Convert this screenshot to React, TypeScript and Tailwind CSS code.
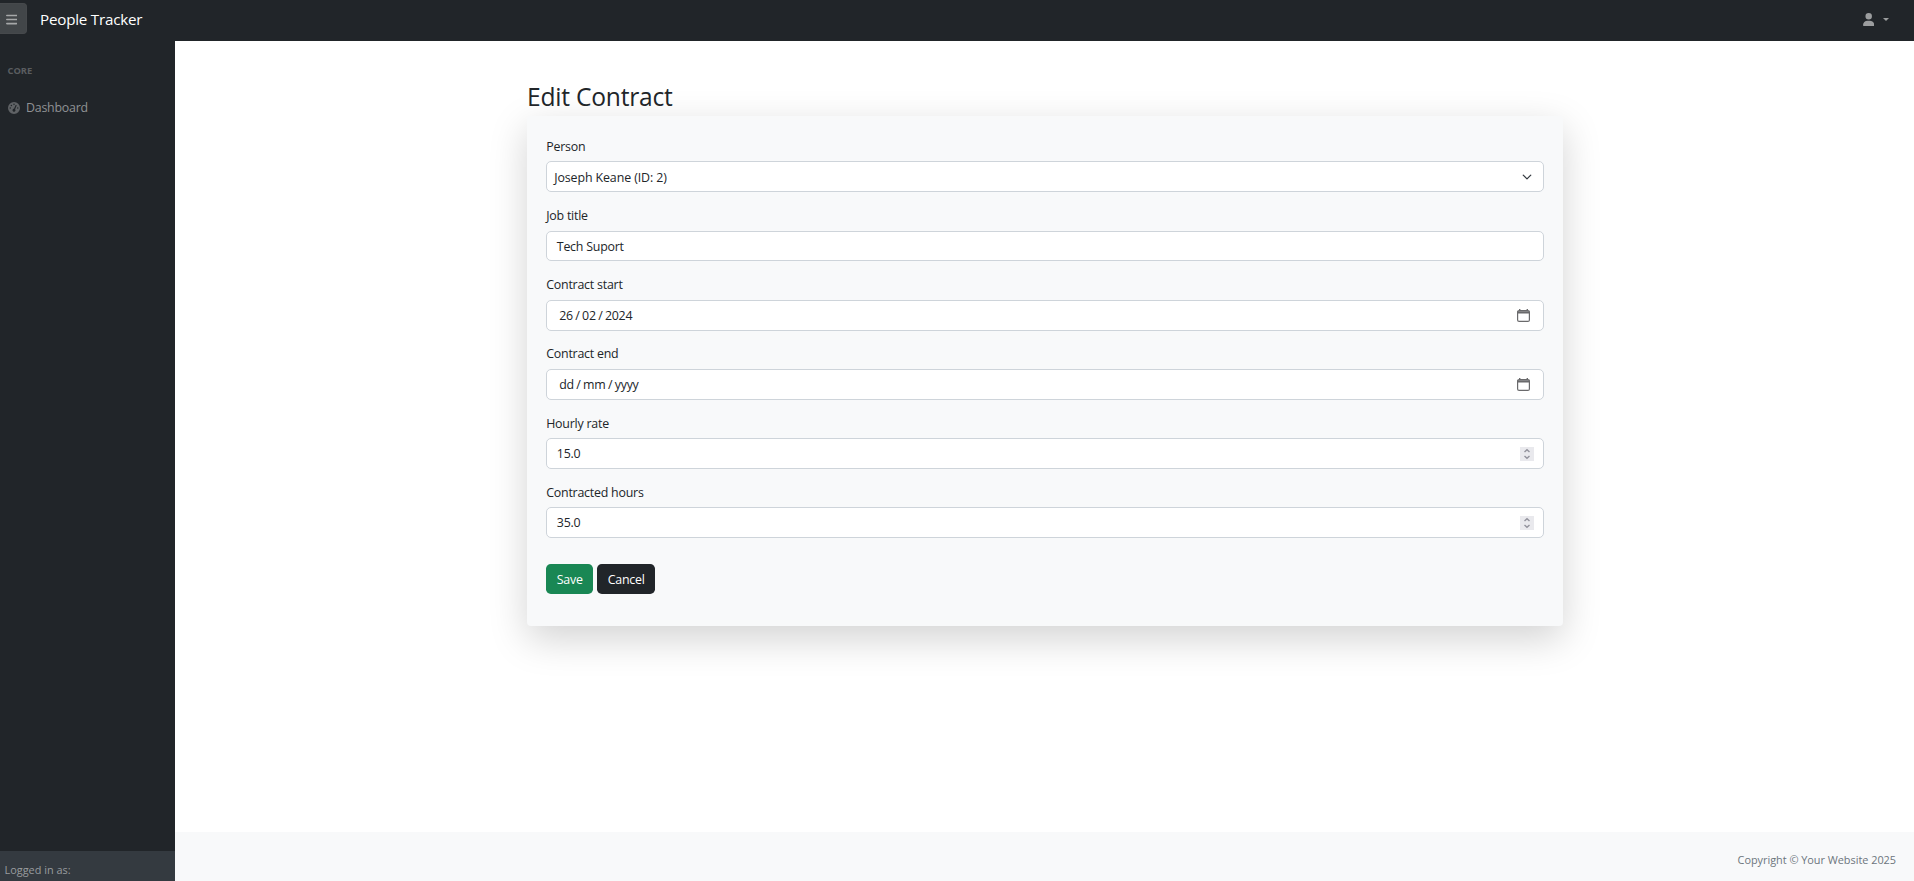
import React from "react";
import { FaBars, FaGaugeHigh, FaUser } from "react-icons/fa6";

const inputClass =
  "flex h-[30.8px] items-center rounded-[5px] border border-[#ced4da] bg-white text-[#212529]";

function Field({ label, children }: { label: string; children: React.ReactNode }) {
  return (
    <div className="mb-[12.8px]">
      <div className="mb-[6.4px] h-[19.2px] pt-[1px] leading-[19.2px]">{label}</div>
      {children}
    </div>
  );
}

function CalendarIcon() {
  return (
    <svg className="mr-[13px] h-[13px] w-[13px]" viewBox="0 0 13 13" fill="none">
      <rect x="0.6" y="1.6" width="11.8" height="10.8" rx="1.5" stroke="#6a6a6c" strokeWidth="1.2" />
      <path d="M0.5 2.2h12v2.4h-12zM2 0h1.4v2H2zM9.6 0H11v2H9.6z" fill="#6a6a6c" />
    </svg>
  );
}

function DateField({ parts }: { parts: string[] }) {
  return (
    <div className={inputClass + " justify-between"}>
      <div className="flex gap-[2.4px] pt-[2px] pl-[12px]">
        <span>{parts[0]}</span>
        <span>/</span>
        <span>{parts[1]}</span>
        <span>/</span>
        <span>{parts[2]}</span>
      </div>
      <CalendarIcon />
    </div>
  );
}

function NumberField({ value }: { value: string }) {
  return (
    <div className={inputClass + " justify-between"}>
      <span className="pt-[2px] pl-[9.6px]">{value}</span>
      <span className="mr-[9px] flex h-[14px] w-[14px] bg-[#e9e9ed]">
        <svg className="h-[14px] w-[14px]" viewBox="0 0 14 14" fill="none" stroke="#92929c" strokeWidth="1.4">
          <path d="M4.5 5L7 2.7L9.5 5M4.5 9L7 11.3L9.5 9" />
        </svg>
      </span>
    </div>
  );
}

export default function App() {
  return (
    <div className="flex h-[881px] w-full flex-col overflow-hidden bg-white font-['Open_Sans','Noto_Sans',sans-serif] text-[12.4px] tracking-[-0.22px] text-[#212529]">
      <header className="flex h-[41px] shrink-0 items-center bg-[#212529]">
        <button className="mb-[5px] flex h-[31px] w-[27px] items-center rounded-r-[4px] border border-l-0 border-[#46494c] bg-[#424649] pt-[2px] pl-[6px] text-[#a6a8a9]">
          <FaBars className="h-[13px] w-[11.4px]" />
        </button>
        <span className="pb-[2px] pl-[13px] text-[15.2px] text-white">People Tracker</span>
        <div className="mr-[25px] ml-auto flex items-center pb-[3px] text-[#9b9d9e]">
          <FaUser className="h-[13px] w-[11.4px]" />
          <svg className="ml-[8.6px] h-[3px] w-[6px]" viewBox="0 0 6 3" fill="currentColor">
            <path d="M0 0h6L3 3z" />
          </svg>
        </div>
      </header>
      <div className="flex min-h-0 flex-1">
        <aside className="flex w-[175px] shrink-0 flex-col bg-[#212529]">
          <div className="mt-[22px] pl-[7.5px] text-[9.4px] leading-[15px] font-bold tracking-[-0.05px] text-[#5a5d60]">CORE</div>
          <div className="mt-[20px] flex h-[20px] items-center pl-[8px] text-[#909294]">
            <FaGaugeHigh className="mr-[6px] h-[12px] w-[12px] text-[#5f6265]" />
            <span className="pt-px">Dashboard</span>
          </div>
          <div className="mt-auto h-[30px] bg-[#343a40] pt-[11px] pl-[4.5px] text-[10.9px] leading-[16px] tracking-[0px] text-[#999c9f]">
            Logged in as:
          </div>
        </aside>
        <div className="flex min-w-0 flex-1 flex-col">
          <main className="flex-1 pl-[352px]">
            <h2 className="mt-[40px] h-[35px] text-[24.6px] leading-[31px]">Edit Contract</h2>
            <div className="h-[510.4px] w-[1036px] rounded-[4px] bg-[#f8f9fa] px-[19.2px] pt-[19.9px] shadow-[0_12.8px_38.4px_rgba(0,0,0,0.175)]">
              <Field label="Person">
                <div className={inputClass + " justify-between"}>
                  <span className="pt-[2px] pl-[7px] tracking-[-0.1px]">Joseph Keane (ID: 2)</span>
                  <svg className="mr-[11px] h-[10px] w-[10px]" viewBox="0 0 16 16" fill="none" stroke="#343a40" strokeWidth="2" strokeLinecap="round" strokeLinejoin="round">
                    <path d="m2 5 6 6 6-6" />
                  </svg>
                </div>
              </Field>
              <Field label="Job title">
                <div className={inputClass}>
                  <span className="pt-[2px] pl-[9.6px]">Tech Suport</span>
                </div>
              </Field>
              <Field label="Contract start">
                <DateField parts={["26", "02", "2024"]} />
              </Field>
              <Field label="Contract end">
                <DateField parts={["dd", "mm", "yyyy"]} />
              </Field>
              <Field label="Hourly rate">
                <NumberField value="15.0" />
              </Field>
              <Field label="Contracted hours">
                <NumberField value="35.0" />
              </Field>
              <div className="mt-[26px] flex gap-[4px] text-white">
                <button className="h-[30px] w-[47px] rounded-[4.8px] bg-[#198754] pt-[2px]">Save</button>
                <button className="h-[30px] w-[58px] rounded-[4.8px] bg-[#212529] pt-[2px]">Cancel</button>
              </div>
            </div>
          </main>
          <footer className="flex h-[49px] items-center justify-end bg-[#f8f9fa] pt-[8px] pr-[18px] text-[10.9px] tracking-[-0.02px] text-[#6c757d]">
            Copyright © Your Website 2025
          </footer>
        </div>
      </div>
    </div>
  );
}
